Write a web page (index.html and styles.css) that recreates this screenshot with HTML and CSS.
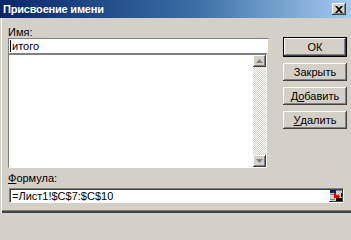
FILE: index.html
```html
<!DOCTYPE html>
<html lang="ru">
<head>
<meta charset="utf-8">
<title>Присвоение имени</title>
<link rel="stylesheet" href="styles.css">
</head>
<body>
<div class="window">
  <div class="titlebar">
    <span class="title">Присвоение имени</span>
    <span class="close"><svg width="8" height="7" viewBox="0 0 8 7"><path d="M0 0h2l2 2 2-2h2L5 3.5 8 7H6L4 5 2 7H0l3-3.5z" fill="#000"/></svg></span>
  </div>
  <div class="client">
    <div class="main">
      <div class="left">
        <div class="label">Имя:</div>
        <div class="name-input"><span class="caret"></span>итого</div>
        <div class="list">
          <div class="list-body"></div>
          <div class="vscroll">
            <div class="arrow"><svg width="7" height="4" viewBox="0 0 7 4"><path d="M3.5 0L7 4H0z" fill="#808080"/></svg></div>
            <div class="track"></div>
            <div class="arrow"><svg width="7" height="4" viewBox="0 0 7 4"><path d="M0 0h7L3.5 4z" fill="#808080"/></svg></div>
          </div>
        </div>
      </div>
      <div class="buttons">
        <div class="btn default"><span class="btn-face">ОК</span></div>
        <div class="btn"><span class="btn-face">Закрыть</span></div>
        <div class="btn"><span class="btn-face">Д<u>о</u>бавить</span></div>
        <div class="btn"><span class="btn-face"><u>У</u>далить</span></div>
      </div>
    </div>
    <div class="label formula-label"><u>Ф</u>ормула:</div>
    <div class="formula-input">
      <span class="formula-text">=Лист1!$C$7:$C$10</span>
      <span class="refbtn"><svg width="12" height="11" viewBox="0 0 12 11">
        <rect x="0" y="0" width="6" height="3" fill="#0a246a"/>
        <rect x="6" y="0" width="6" height="1" fill="#808080"/>
        <rect x="0" y="4" width="5" height="1" fill="#808080"/>
        <path d="M4 3h2v2h2v-1l2 2.5-2 2.5v-1H4z" fill="#e00000"/>
        <rect x="6" y="8" width="6" height="3" fill="#000"/>
        <rect x="0" y="9" width="5" height="1" fill="#808080"/>
        <rect x="11" y="3" width="1" height="4" fill="#000"/>
      </svg></span>
    </div>
  </div>
</div>
</body>
</html>
```
FILE: styles.css
```css
html, body {
  margin: 0;
  padding: 0;
  background: #d4d0c8;
}
body {
  width: 351px;
  height: 213px;
  overflow: hidden;
  font-family: "Liberation Sans", Arial, sans-serif;
  font-size: 11px;
  color: #000;
}
.window {
  width: 351px;
  height: 213px;
  background: #d4d0c8;
  box-sizing: border-box;
  display: flex;
  flex-direction: column;
  box-shadow: inset 0 -1px #404040, inset 0 -2px #404040, inset 0 -3px #808080;
}
.titlebar {
  height: 18px;
  flex: none;
  display: flex;
  align-items: center;
  justify-content: space-between;
  padding: 0 5px 0 3px;
  background: linear-gradient(to right, #0a246a 0%, #3a6ea5 55%, #a6caf0 100%);
}
.title {
  color: #fff;
  font-weight: bold;
  font-size: 11px;
  letter-spacing: -0.2px;
}
.close {
  width: 14px;
  height: 12px;
  box-sizing: border-box;
  background: #d4d0c8;
  display: flex;
  align-items: center;
  justify-content: center;
  box-shadow: inset -1px -1px #404040, inset 1px 1px #fff, inset -2px -2px #808080;
}
.client {
  flex: 1;
  padding: 8px 0 0 7px;
  border-left: 1px solid #d4d0c8;
  box-shadow: inset 1px 0 #fff;
  margin-left: 0;
}
.main {
  display: flex;
}
.left {
  width: 261px;
  display: flex;
  flex-direction: column;
}
.label {
  height: 12px;
  line-height: 12px;
}
.name-input {
  height: 15px;
  box-sizing: border-box;
  background: #fff;
  border-top: 1px solid #808080;
  border-left: 1px solid #808080;
  border-right: 1px solid #d4d0c8;
  display: flex;
  align-items: center;
  padding-left: 1px;
  line-height: 13px;
}
.caret {
  width: 1px;
  height: 12px;
  background: #000;
  margin-right: 1px;
}
.list {
  width: 259px;
  height: 115px;
  box-sizing: border-box;
  display: flex;
  background: #fff;
  border-top: 2px solid #808080;
  border-left: 1px solid #808080;
  border-right: 1px solid #fff;
  border-bottom: 1px solid #fff;
  box-shadow: 1px 1px #d4d0c8;
}
.list-body {
  flex: 1;
}
.vscroll {
  width: 13px;
  display: flex;
  flex-direction: column;
}
.arrow {
  height: 12px;
  flex: none;
  background: #d4d0c8;
  display: flex;
  align-items: center;
  justify-content: center;
  box-shadow: inset -1px -1px #404040, inset 1px 1px #fff, inset -2px -2px #808080;
}
.track {
  flex: 1;
  background: repeating-conic-gradient(#d4d0c8 0 25%, #fff 0 50%) 0 0 / 2px 2px;
}
.buttons {
  margin-left: 14px;
  padding-top: 11px;
  display: flex;
  flex-direction: column;
  gap: 6px;
}
.btn {
  width: 64px;
  height: 18px;
  box-sizing: border-box;
  display: flex;
}
.btn.default {
  height: 20px;
  border: 1px solid #000;
}
.btn-face {
  flex: 1;
  display: flex;
  align-items: center;
  justify-content: center;
  background: #d4d0c8;
  box-shadow: inset -1px -1px #404040, inset 1px 1px #fff, inset -2px -2px #808080;
  padding-bottom: 1px;
}
.formula-label {
  margin-top: 4px;
}
.formula-input {
  margin-top: 4px;
  margin-left: 1px;
  width: 335px;
  height: 15px;
  box-sizing: border-box;
  background: #fff;
  border-top: 1px solid #808080;
  border-left: 1px solid #808080;
  border-right: 1px solid #fff;
  border-bottom: 1px solid #fff;
  box-shadow: inset 1px 1px #404040, 1px 1px #d4d0c8;
  display: flex;
  align-items: center;
  justify-content: space-between;
  padding-left: 2px;
}
.formula-text {
  line-height: 12px;
}
.refbtn {
  width: 14px;
  height: 12px;
  margin-right: 0;
  background: #d4d0c8;
  display: flex;
  align-items: center;
  justify-content: center;
  box-shadow: inset -1px -1px #404040, inset 1px 1px #fff;
}
```
